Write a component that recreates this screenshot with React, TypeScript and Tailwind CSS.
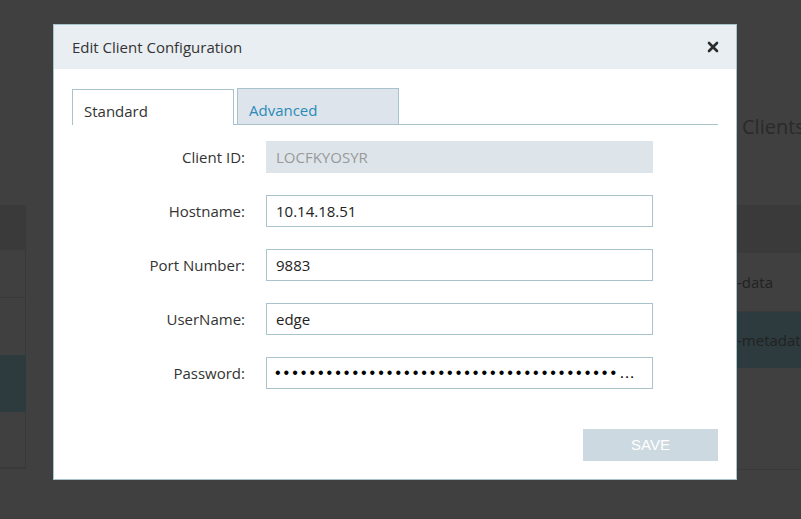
import React from 'react';

const fields = [
  { label: 'Hostname:', value: '10.14.18.51' },
  { label: 'Port Number:', value: '9883' },
  { label: 'UserName:', value: 'edge' },
];

export default function App() {
  const dots = '•'.repeat(48);

  return (
    <div className="relative w-[801px] h-[519px] overflow-hidden bg-[#404040] font-['Open_Sans',sans-serif]">
      {/* Dimmed page behind the dialog */}
      <div className="flex h-full">
        {/* Left list panel */}
        <div className="w-[26px] pt-[205px] flex flex-col">
          <div className="h-[45px] bg-[#3a3a3a]" />
          <div className="h-[48px] border-b border-r border-[#393939]" />
          <div className="h-[57px] border-r border-[#393939]" />
          <div className="h-[57px] bg-[#2d3b3e]" />
          <div className="h-[57px] border-b-2 border-r border-[#393939]" />
        </div>
        <div className="flex-1" />
        {/* Right table panel */}
        <div className="w-[64px] flex flex-col">
          <div className="h-[205px] pt-[113px] pl-[5px] text-[20px] leading-[28px] text-[#2a2a2a] whitespace-nowrap">Clients</div>
          <div className="h-[48px] bg-[#3a3a3a]" />
          <div className="h-[59px] flex items-center text-[15px] text-[#222] whitespace-nowrap border-b border-[#3a3a3a]">-data</div>
          <div className="h-[56px] flex items-center bg-[#2d3b3e] text-[15px] text-[#222] whitespace-nowrap">-metadata</div>
          <div className="h-[102px] border-b border-[#393939]" />
        </div>
      </div>

      {/* Dialog */}
      <div className="absolute left-[53px] top-[24px] w-[684px] h-[456px] bg-white border border-[#a9c3cc] flex flex-col">
        <div className="h-[44px] bg-[#e9eef2] flex items-center justify-between pl-[18px] pr-[17px]">
          <span className="text-[15px] text-[#333]">Edit Client Configuration</span>
          <svg width="12" height="12" viewBox="0 0 12 12">
            <path d="M2 2 L10 10 M10 2 L2 10" stroke="#2b2b2b" strokeWidth="2.6" strokeLinecap="round" />
          </svg>
        </div>

        <div className="px-[18px] pt-[20px] flex flex-col">
          {/* Tabs */}
          <div className="flex items-end h-[36px] border-b border-[#a9c3cc]">
            <div className="w-[162px] h-[36px] border border-b-0 border-[#a9c3cc] bg-white -mb-px pl-[11px] pt-[10px] text-[15px] leading-[22px] text-[#333]">Standard</div>
            <div className="ml-[3px] w-[162px] h-[36px] border border-b-0 border-[#a9c3cc] bg-[#dde4ec] pl-[11px] pt-[10px] text-[15px] leading-[22px] text-[#2b8bb7]">Advanced</div>
          </div>

          {/* Form */}
          <div className="flex flex-col gap-[22px] pt-[16px]">
            <div className="flex items-center">
              <div className="w-[173px] text-right text-[15px] text-[#333]">Client ID:</div>
              <div className="ml-[21px] w-[387px] h-[32px] bg-[#dde4ea] flex items-center px-[10px] text-[15px] text-[#999]">LOCFKYOSYR</div>
            </div>
            {fields.map((f) => (
              <div key={f.label} className="flex items-center">
                <div className="w-[173px] text-right text-[15px] text-[#333]">{f.label}</div>
                <div className="ml-[21px] w-[387px] h-[32px] border border-[#a9c3cc] flex items-center px-[9px] text-[15px] text-[#222]">{f.value}</div>
              </div>
            ))}
            <div className="flex items-center">
              <div className="w-[173px] text-right text-[15px] text-[#333]">Password:</div>
              <div className="ml-[21px] w-[387px] h-[32px] border border-[#a9c3cc] flex items-center pl-[8px] pr-[10px]">
                <div className="truncate font-['Liberation_Sans',sans-serif] text-[16px] tracking-[3px] text-black">{dots}</div>
              </div>
            </div>
          </div>

          <div className="flex justify-end pt-[40px]">
            <div className="w-[135px] h-[32px] bg-[#cdd9e1] flex items-center justify-center font-['Liberation_Sans',sans-serif] text-[15px] text-white">SAVE</div>
          </div>
        </div>
      </div>
    </div>
  );
}
